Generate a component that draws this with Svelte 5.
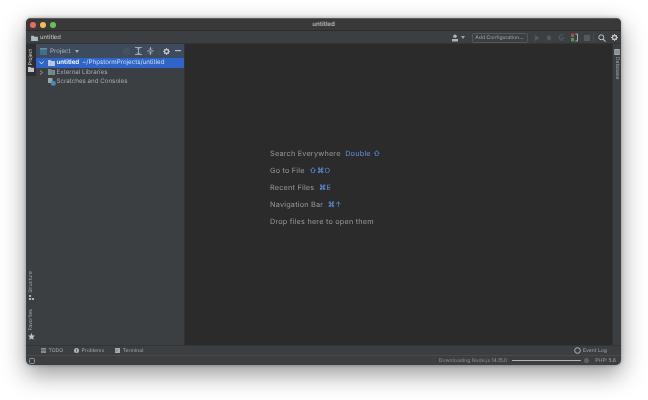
<script>
  const hints = [
    { label: 'Search Everywhere', keys: 'Double ⇧' },
    { label: 'Go to File', keys: '⇧⌘O' },
    { label: 'Recent Files', keys: '⌘E' },
    { label: 'Navigation Bar', keys: '⌘↑' },
    { label: 'Drop files here to open them', keys: '' }
  ];
</script>

<div class="page">
  <div class="window">
    <header class="titlebar">
      <div class="lights"><i class="red"></i><i class="yellow"></i><i class="green"></i></div>
      <span class="title">untitled</span>
    </header>

    <div class="navbar">
      <svg class="folder" width="7" height="6" viewBox="0 0 8 7"><path d="M0 1h3l1 1h4v5H0z" fill="#aeb9c0"/></svg>
      <span class="crumb">untitled</span>
      <div class="spacer"></div>
      <svg class="user" width="8" height="8" viewBox="0 0 8 8"><circle cx="4" cy="2.2" r="1.8" fill="#b0b3b5"/><path d="M1 5h6v2.500H1z" fill="#b0b3b5"/></svg>
      <svg class="caret" width="4" height="3" viewBox="0 0 4 3"><path d="M0 0h4L2 3z" fill="#a0a3a5"/></svg>
      <div class="config">Add Configuration...</div>
      <svg class="tb first" width="6" height="6" viewBox="0 0 7 7"><path d="M1 0l5.500 3.500L1 7z" fill="#55595b"/></svg>
      <svg class="tb" width="6" height="7" viewBox="0 0 7 8"><ellipse cx="3.500" cy="4.500" rx="2.500" ry="3" fill="#55595b"/></svg>
      <svg class="tb" width="7" height="7" viewBox="0 0 8 8"><path d="M6 1.500A3 3 0 1 0 6 6.500" stroke="#55595b" stroke-width="1.300" fill="none"/><path d="M4 3l4 1.500L4 6z" fill="#55595b"/></svg>
      <svg class="tb" width="7" height="9" viewBox="0 0 8 10"><rect x="0" y="0.500" width="3.500" height="4" fill="#a84f4c"/><rect x="0" y="5.500" width="3.500" height="4" fill="#499c54"/><path d="M5 1h2.500v8H5" stroke="#c4c7c9" stroke-width="1" fill="none"/></svg>
      <svg class="tb" width="6" height="6" viewBox="0 0 7 7"><rect width="7" height="7" fill="#55595b"/></svg>
      <span class="sep"></span>
      <svg class="tb" width="8" height="8" viewBox="0 0 9 9"><circle cx="3.700" cy="3.700" r="2.800" stroke="#c4c7c9" stroke-width="1.100" fill="none"/><path d="M5.800 5.800L8.500 8.500" stroke="#c4c7c9" stroke-width="1.300"/></svg>
      <svg class="tb gear" width="7" height="7" viewBox="0 0 8 8"><circle cx="4" cy="4" r="2.300" stroke="#c4c7c9" stroke-width="1.500" fill="none"/><path d="M4 0v1.500M4 6.500V8M0 4h1.500M6.500 4H8M1.200 1.200l1 1M5.800 5.800l1 1M6.800 1.200l-1 1M2.200 5.800l-1 1" stroke="#c4c7c9" stroke-width="1.100"/></svg>
    </div>

    <div class="main">
      <aside class="stripe left">
        <div class="stripe-top">
          <div class="stripe-tab active">
            <span class="vtext bright">Project</span>
            <svg width="6" height="5" viewBox="0 0 6 5"><path d="M0 0h2.500l.7.800H6V5H0z" fill="#c0c3c5"/></svg>
          </div>
        </div>
        <div class="stripe-bottom">
          <div class="stripe-tab">
            <span class="vtext">Structure</span>
            <svg width="5" height="5" viewBox="0 0 6 6"><path d="M0 0h2.500v2.500H0zM0 3.500h2.500V6H0zM3.500 3.500H6V6H3.500z" fill="#b0b3b5"/></svg>
          </div>
          <div class="stripe-tab">
            <span class="vtext">Favorites</span>
            <svg width="7" height="7" viewBox="0 0 10 10"><path d="M5 0l1.500 3.400 3.500.3-2.700 2.300.9 3.600L5 7.700 1.800 9.600l.9-3.600L0 3.700l3.500-.3z" fill="#c0c3c5"/></svg>
          </div>
        </div>
      </aside>

      <section class="project">
        <div class="panel-head">
          <svg width="7" height="7" viewBox="0 0 7 7"><rect width="7" height="7" fill="#3f6e8f"/><rect y="0" width="7" height="1.500" fill="#6a8ba3"/></svg>
          <span class="panel-title">Project</span>
          <svg width="4" height="3" viewBox="0 0 4 3"><path d="M0 0h4L2 3z" fill="#a8abad"/></svg>
          <div class="spacer"></div>
          <svg class="hicon" width="7" height="7" viewBox="0 0 7 7"><circle cx="3.500" cy="3.500" r="3" stroke="#55595b" fill="none"/><path d="M2 2l3 3M5 2L2 5" stroke="#55595b" stroke-width=".8"/></svg>
          <svg class="hicon" width="7" height="8" viewBox="0 0 7 8"><path d="M0 .5h7M0 7.500h7M3.500 1v6M2 2.500L3.500 1 5 2.500M2 5.500L3.500 7 5 5.500" stroke="#aeb1b3" stroke-width=".9" fill="none"/></svg>
          <svg class="hicon" width="7" height="8" viewBox="0 0 7 8"><path d="M0 4h7M3.500 0v3M3.500 5v3M2 1.500L3.500 3 5 1.500M2 6.500L3.500 5 5 6.500" stroke="#aeb1b3" stroke-width=".9" fill="none"/></svg>
          <span class="sep small"></span>
          <svg class="hicon" width="7" height="7" viewBox="0 0 8 8"><circle cx="4" cy="4" r="2.300" stroke="#c0c3c5" stroke-width="1.500" fill="none"/><path d="M4 0v1.500M4 6.500V8M0 4h1.500M6.500 4H8M1.200 1.200l1 1M5.800 5.800l1 1M6.800 1.200l-1 1M2.200 5.800l-1 1" stroke="#c0c3c5" stroke-width="1.100"/></svg>
          <svg class="hicon" width="6" height="2" viewBox="0 0 6 2"><rect width="6" height="1.200" fill="#b8bbbd"/></svg>
        </div>
        <div class="row selected">
          <svg class="chev" width="5" height="4" viewBox="0 0 5 4"><path d="M.5.5L2.500 3 4.500.5" stroke="#c6d4ea" fill="none"/></svg>
          <svg width="7" height="6" viewBox="0 0 7 6"><path d="M0 0h2.800l.8 1H7v5H0z" fill="#b9c8d6"/></svg>
          <b>untitled</b><span class="path">~/PhpstormProjects/untitled</span>
        </div>
        <div class="row">
          <svg class="chev" width="4" height="5" viewBox="0 0 4 5"><path d="M.5.500L3 2.500.5 4.500" stroke="#9a9d9f" fill="none"/></svg>
          <svg width="7" height="6" viewBox="0 0 7 6"><path d="M0 0h2.800l.8 1H7v5H0z" fill="#7f8a8c"/><rect x="3" y="2" width="2" height="4" fill="#5e8a6e"/></svg>
          <span>External Libraries</span>
        </div>
        <div class="row">
          <span class="chev blank"></span>
          <svg width="8" height="8" viewBox="0 0 8 8"><rect x="0" y="0" width="4.500" height="5" fill="#9ea3a6"/><circle cx="5.300" cy="5.300" r="2.500" fill="#3a90b8"/></svg>
          <span class="scratch">Scratches and Consoles</span>
        </div>
      </section>

      <section class="editor">
        <div class="hints">
          {#each hints as h}
            <div class="hint"><span>{h.label}</span>{#if h.keys}<span class="keys">{h.keys}</span>{/if}</div>
          {/each}
        </div>
      </section>

      <aside class="stripe right">
        <div class="stripe-tab">
          <svg width="6" height="6" viewBox="0 0 6 6"><rect width="6" height="6" rx="1" fill="#a8abad"/><path d="M0 2h6M0 4h6" stroke="#3c3f41" stroke-width=".5"/></svg>
          <span class="vtext cw">Database</span>
        </div>
      </aside>
    </div>

    <div class="toolbar">
      <div class="tool">
        <svg width="5" height="5" viewBox="0 0 6 6"><path d="M0 .5h6M0 2.300h6M0 4h6M0 5.600h6" stroke="#a8abad" stroke-width="1"/></svg>
        <span>TODO</span>
      </div>
      <div class="tool">
        <svg width="5" height="5" viewBox="0 0 6 6"><circle cx="3" cy="3" r="3" fill="#b4b7b9"/><rect x="2.500" y="1.300" width="1" height="2.200" fill="#3c3f41"/><rect x="2.500" y="4" width="1" height="1" fill="#3c3f41"/></svg>
        <span>Problems</span>
      </div>
      <div class="tool">
        <svg width="5" height="5" viewBox="0 0 6 6"><rect width="6" height="6" fill="#a8abad"/><path d="M1 1.500L2.500 3 1 4.500" stroke="#3c3f41" fill="none" stroke-width=".7"/></svg>
        <span>Terminal</span>
      </div>
      <div class="spacer"></div>
      <div class="tool log">
        <svg width="7" height="7" viewBox="0 0 7 7"><circle cx="3.500" cy="3.500" r="2.800" stroke="#b4b7b9" fill="none"/></svg>
        <span>Event Log</span>
      </div>
    </div>

    <footer class="status">
      <svg class="corner" width="6" height="6" viewBox="0 0 6 6"><rect x=".5" y=".5" width="5" height="5" rx=".8" stroke="#8f9294" fill="none"/></svg>
      <div class="spacer"></div>
      <span>Downloading Node.js 14.15.0</span>
      <div class="progress"></div>
      <span class="stop"></span>
      <span class="php">PHP: 5.6</span>
    </footer>
  </div>
</div>

<style>
  :global(body) {
    margin: 0;
    background: #fff;
  }
  .page {
    width: 648px;
    height: 400px;
    box-sizing: border-box;
    padding: 18px 27px 35px 26px;
    overflow: hidden;
    font-family: "Inter", "Liberation Sans", sans-serif;
    color: #a4a7a9;
    font-size: 5.500px;
    text-rendering: geometricPrecision;
  }
  .window {
    height: 100%;
    display: flex;
    flex-direction: column;
    background: #3c3f41;
    border-radius: 5px;
    overflow: hidden;
    box-shadow: 0 9px 24px rgba(0, 0, 0, 0.42), 0 0 4px rgba(0, 0, 0, 0.3);
    filter: blur(0.25px);
  }
  .spacer { flex: 1; }
  .titlebar {
    height: 13px;
    flex: none;
    position: relative;
    display: flex;
    align-items: center;
    justify-content: center;
    background: #3a3838;
    border-top: 1px solid #5a5b5c;
    box-sizing: border-box;
    border-bottom: 1px solid #2b2c2d;
  }
  .lights {
    position: absolute;
    left: 4px;
    top: 3px;
    display: flex;
    gap: 4px;
  }
  .lights i {
    width: 6px;
    height: 6px;
    border-radius: 50%;
  }
  .red { background: #ec6a5e; }
  .yellow { background: #f4bf4f; }
  .green { background: #61c554; }
  .title {
    font-size: 6.200px;
    font-weight: 600;
    color: #b4b6b8;
  }
  .navbar {
    height: 13px;
    flex: none;
    display: flex;
    align-items: center;
    padding: 1px 3.500px 0 5px;
    border-bottom: 1px solid #323437;
    box-sizing: border-box;
    background: #3c3f41;
  }
  .crumb {
    margin-left: 2px;
    color: #b8babc;
    font-size: 5.800px;
    font-weight: 500;
  }
  .caret { margin: 0 7px 0 2px; }
  .config {
    width: 56px;
    height: 10px;
    line-height: 8.500px;
    text-align: center;
    white-space: nowrap;
    box-sizing: border-box;
    border: 1px solid #55585a;
    border-radius: 1.500px;
    font-size: 5.100px;
    color: #a4a7a9;
    margin-right: 6px;
  }
  .tb { margin-left: 6px; flex: none; }
  .tb.first { margin-left: 0; }
  .sep {
    width: 1px;
    height: 9px;
    background: #4b4e50;
    margin-left: 3px;
  }
  .sep.small { margin-left: 0; margin-right: 3px; height: 7px; }
  .tb + .sep + .tb { margin-left: 4px; }
  .gear { margin-left: 5px; }
  .main {
    flex: 1;
    min-height: 0;
    display: flex;
  }
  .stripe {
    width: 10px;
    flex: none;
    display: flex;
    flex-direction: column;
    background: #3c3f41;
  }
  .stripe.left { justify-content: space-between; }
  .stripe.right { width: 9px; border-left: 1px solid #323437; box-sizing: border-box; padding-top: 5px; }
  .stripe-top, .stripe-bottom { display: flex; flex-direction: column; }
  .stripe-bottom { gap: 9px; padding-bottom: 5px; }
  .stripe-tab {
    display: flex;
    flex-direction: column;
    align-items: center;
    gap: 2px;
  }
  .stripe-tab.active {
    background: #2c2e30;
    padding: 4.500px 0 4px;
  }
  .vtext {
    writing-mode: vertical-rl;
    transform: rotate(180deg);
    font-size: 5px;
    line-height: 8px;
    color: #a0a3a5;
  }
  .vtext.cw { transform: none; }
  .vtext.bright { color: #d0d2d4; }
  .project {
    width: 148px;
    flex: none;
    background: #3c3f41;
    border-right: 1px solid #323437;
    box-sizing: content-box;
  }
  .panel-head {
    height: 14px;
    display: flex;
    align-items: center;
    gap: 0;
    padding: 0 3px 0 4px;
    background: #3d4b5c;
  }
  .panel-title {
    margin: 0 4px 0 3px;
    font-size: 6.200px;
    color: #b0b3b5;
  }
  .hicon { margin-right: 5px; }
  .hicon:last-child { margin-right: 0; }
  .row {
    height: 9.600px;
    display: flex;
    align-items: center;
    gap: 2px;
    padding-left: 2.500px;
    font-size: 6.200px;
    white-space: nowrap;
    color: #a8abad;
  }
  .row .chev { width: 5px; margin-right: 2px; flex: none; }
  .row .blank { display: block; }
  .scratch { margin-left: -1px; }
  .selected {
    background: #2f65ca;
    color: #dbe6fa;
  }
  .selected b { color: #fff; font-weight: 600; }
  .path { margin-left: 1px; color: #d3def4; }
  .editor {
    flex: 1;
    min-width: 0;
    background: #2b2b2b;
    display: flex;
    flex-direction: column;
    justify-content: center;
    padding-left: 85px;
  }
  .hints {
    display: flex;
    flex-direction: column;
    gap: 7px;
    margin-top: -13px;
    font-size: 7.300px;
    line-height: 10px;
    letter-spacing: .2px;
    color: #979a9c;
    white-space: nowrap;
  }
  .hint { display: flex; gap: 4.500px; }
  .keys { color: #5f97e0; }
  .toolbar {
    height: 8.500px;
    flex: none;
    display: flex;
    align-items: center;
    gap: 11px;
    padding: 1px 14px 0 15px;
    border-top: 1px solid #323437;
    box-sizing: content-box;
    font-size: 5.100px;
  }
  .tool { display: flex; align-items: center; gap: 2.500px; }
  .status {
    height: 10px;
    flex: none;
    display: flex;
    align-items: center;
    padding: 0 5px 0 3px;
    border-top: 1px solid #484b4d;
    box-sizing: border-box;
    font-size: 5.100px;
    color: #8f9294;
  }
  .progress {
    width: 69px;
    height: 1.500px;
    margin-left: 5px;
    background: #b2b4b6;
    border-radius: 1px;
  }
  .stop {
    width: 5px;
    height: 5px;
    margin-left: 3px;
    border-radius: 50%;
    background: #5f6264;
  }
  .php { margin-left: 6px; color: #9b9ea0; }
</style>
